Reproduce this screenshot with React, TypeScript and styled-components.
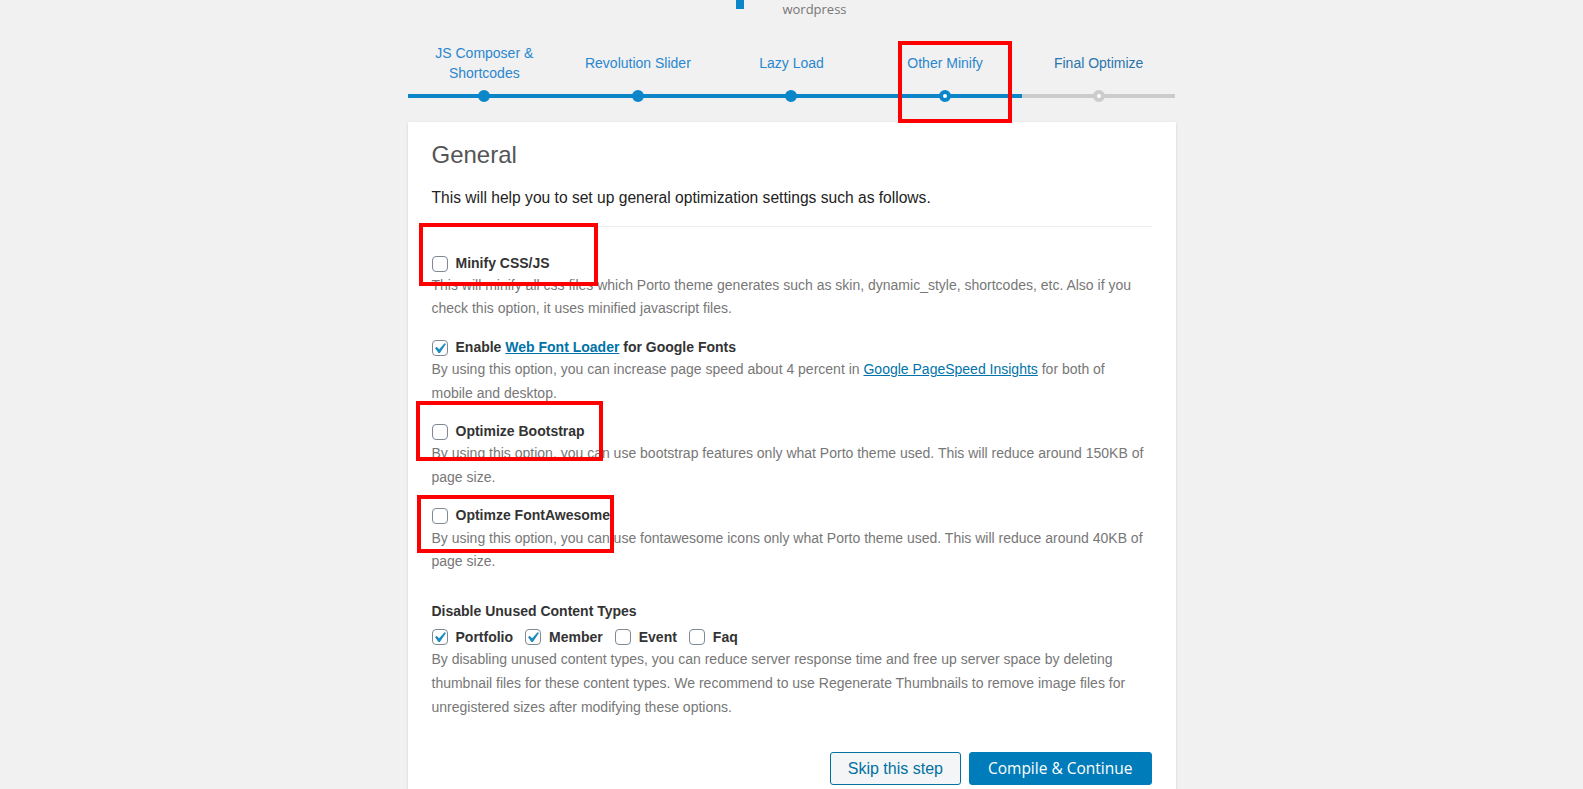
import React from "react";
import styled, { createGlobalStyle } from "styled-components";

const BLUE = "#0a86c9";

const GlobalStyle = createGlobalStyle`
  html, body { margin: 0; padding: 0; background: #f1f1f1; }
  body { font-family: "Liberation Sans", Arial, sans-serif; color: #444; }
  *, *::before, *::after { box-sizing: border-box; }
`;

const Page = styled.div`
  position: relative;
  height: 100vh;
  overflow: hidden;
`;

const Wrapper = styled.div`
  width: 768px;
  margin: 0 auto;
`;

const Header = styled.div`
  display: flex;
  justify-content: center;
  align-items: flex-start;
  gap: 38px;
  height: 18px;
`;

const LogoMark = styled.div`
  width: 8px;
  height: 9px;
  background: ${BLUE};
`;

const LogoText = styled.span`
  font-family: "Open Sans", sans-serif;
  font-size: 13px;
  line-height: 18px;
  color: #777;
`;

type StepState = "done" | "active" | "todo";

const Steps = styled.ol`
  display: flex;
  list-style: none;
  margin: 26px 0 0;
  padding: 0;
`;

const Step = styled.li<{ $state: StepState }>`
  position: relative;
  flex: 1 1 0;
  display: flex;
  align-items: center;
  justify-content: center;
  min-height: 54px;
  padding: 0 4px 11px;
  border-bottom: 4px solid ${(p) => (p.$state === "todo" ? "#ccc" : BLUE)};
  font-size: 14px;
  line-height: 19.5px;
  text-align: center;
  color: ${(p) => (p.$state === "todo" ? "#2b75ad" : "#2a87cf")};

  &::before {
    content: "";
    position: absolute;
    left: 50%;
    bottom: 0;
    width: 12px;
    height: 12px;
    margin: 0 0 -8px -6px;
    border: 4px solid ${(p) => (p.$state === "todo" ? "#ccc" : BLUE)};
    border-radius: 50%;
    background: ${(p) => (p.$state === "done" ? BLUE : "#fff")};
  }
`;

const Card = styled.div`
  margin-top: 24px;
  background: #fff;
  box-shadow: 0 1px 3px rgba(0, 0, 0, 0.13);
  padding: 18px 24px 24px;
`;

const Title = styled.h1`
  margin: 0;
  font-size: 24px;
  line-height: 30px;
  font-weight: 400;
  color: #555;
`;

const Intro = styled.p`
  margin: 16px 0 0;
  padding-bottom: 16px;
  border-bottom: 1px solid #eee;
  font-size: 15.6px;
  line-height: 24px;
  color: #222;
`;

const Options = styled.div`
  margin-top: 24px;
`;

const Option = styled.div`
  & + & {
    margin-top: 14.5px;
  }
`;

const OptionLabel = styled.label`
  display: flex;
  align-items: center;
  gap: 8px;
  padding-top: 1px;
  margin-bottom: -1px;
  font-size: 14px;
  font-weight: 700;
  line-height: 23.2px;
  color: #333;
`;

const Desc = styled.p<{ $lh?: number }>`
  margin: 0;
  max-width: 714px;
  font-size: 14px;
  line-height: ${(p) => p.$lh ?? 23.2}px;
  color: #777;
`;

const Link = styled.a`
  color: #0073aa;
  text-decoration: underline;
`;

const Box = styled.span`
  position: relative;
  flex: none;
  width: 16px;
  height: 16px;
  border: 1px solid #7e8993;
  border-radius: 4px;
  background: #fff;
`;

const Tick = styled.svg`
  position: absolute;
  top: -3px;
  left: -4px;
  width: 21px;
  height: 21px;
`;

const Section = styled.div`
  margin-top: 26px;
`;

const SectionTitle = styled.div`
  font-size: 14px;
  font-weight: 700;
  line-height: 24px;
  color: #333;
`;

const TypeRow = styled.div`
  display: flex;
  align-items: center;
  gap: 12px;
  margin: 3px 0 -2px;
  height: 23px;
`;

const TypeLabel = styled.label`
  display: flex;
  align-items: center;
  gap: 8px;
  font-size: 14px;
  font-weight: 700;
  line-height: 23px;
  color: #333;
`;

const Actions = styled.div`
  display: flex;
  justify-content: flex-end;
  gap: 8px;
  margin-top: 33px;
`;

const Button = styled.button<{ $primary?: boolean }>`
  height: 33px;
  padding: 0 ${(p) => (p.$primary ? 18 : 17)}px;
  border-radius: 3px;
  border: 1px solid ${(p) => (p.$primary ? "#007cba" : "#0071a1")};
  background: ${(p) => (p.$primary ? "#007cba" : "#f3f5f6")};
  color: ${(p) => (p.$primary ? "#fff" : "#0071a1")};
  font-family: ${(p) =>
    p.$primary ? '"Open Sans", sans-serif' : '"Liberation Sans", Arial, sans-serif'};
  font-size: ${(p) => (p.$primary ? 15.5 : 16)}px;
  line-height: 31px;
  cursor: pointer;
`;

const Annotation = styled.div<{ $x: number; $y: number; $w: number; $h: number }>`
  position: absolute;
  left: ${(p) => p.$x}px;
  top: ${(p) => p.$y}px;
  width: ${(p) => p.$w}px;
  height: ${(p) => p.$h}px;
  border: 4px solid #ff0000;
  pointer-events: none;
`;

function Checkbox({ checked }: { checked?: boolean }) {
  return (
    <Box>
      {checked && (
        <Tick viewBox="0 0 20 20">
          <path d="M14.83 4.89l1.34.94-5.81 8.38H9.02L5.78 9.67l1.34-1.25 2.57 2.4z" fill="#1e8cbe" />
        </Tick>
      )}
    </Box>
  );
}

const steps: { label: string; state: StepState }[] = [
  { label: "JS Composer & Shortcodes", state: "done" },
  { label: "Revolution Slider", state: "done" },
  { label: "Lazy Load", state: "done" },
  { label: "Other Minify", state: "active" },
  { label: "Final Optimize", state: "todo" },
];

const types = [
  { label: "Portfolio", checked: true },
  { label: "Member", checked: true },
  { label: "Event", checked: false },
  { label: "Faq", checked: false },
];

export default function App() {
  return (
    <Page>
      <GlobalStyle />
      <Wrapper>
        <Header>
          <LogoMark />
          <LogoText>wordpress</LogoText>
        </Header>
        <Steps>
          {steps.map((s) => (
            <Step key={s.label} $state={s.state}>
              {s.label}
            </Step>
          ))}
        </Steps>
        <Card>
          <Title>General</Title>
          <Intro>This will help you to set up general optimization settings such as follows.</Intro>
          <Options>
            <Option>
              <OptionLabel>
                <Checkbox />
                <span>Minify CSS/JS</span>
              </OptionLabel>
              <Desc>
                This will minify all css files which Porto theme generates such as skin, dynamic_style,
                shortcodes, etc. Also if you check this option, it uses minified javascript files.
              </Desc>
            </Option>
            <Option>
              <OptionLabel>
                <Checkbox checked />
                <span>
                  Enable <Link href="#">Web Font Loader</Link> for Google Fonts
                </span>
              </OptionLabel>
              <Desc>
                By using this option, you can increase page speed about 4 percent in{" "}
                <Link href="#">Google PageSpeed Insights</Link> for both of mobile and desktop.
              </Desc>
            </Option>
            <Option>
              <OptionLabel>
                <Checkbox />
                <span>Optimize Bootstrap</span>
              </OptionLabel>
              <Desc>
                By using this option, you can use bootstrap features only what Porto theme used. This will
                reduce around 150KB of page size.
              </Desc>
            </Option>
            <Option>
              <OptionLabel>
                <Checkbox />
                <span>Optimze FontAwesome</span>
              </OptionLabel>
              <Desc>
                By using this option, you can use fontawesome icons only what Porto theme used. This will
                reduce around 40KB of page size.
              </Desc>
            </Option>
          </Options>
          <Section>
            <SectionTitle>Disable Unused Content Types</SectionTitle>
            <TypeRow>
              {types.map((t) => (
                <TypeLabel key={t.label}>
                  <Checkbox checked={t.checked} />
                  <span>{t.label}</span>
                </TypeLabel>
              ))}
            </TypeRow>
            <Desc $lh={24}>
              By disabling unused content types, you can reduce server response time and free up server space
              by deleting thumbnail files for these content types. We recommend to use Regenerate Thumbnails to
              remove image files for unregistered sizes after modifying these options.
            </Desc>
          </Section>
          <Actions>
            <Button>Skip this step</Button>
            <Button $primary>Compile &amp; Continue</Button>
          </Actions>
        </Card>
      </Wrapper>
      <Annotation $x={898} $y={41} $w={114} $h={82} />
      <Annotation $x={419} $y={223} $w={179} $h={63} />
      <Annotation $x={416} $y={401} $w={187} $h={60} />
      <Annotation $x={417} $y={495} $w={197} $h={58} />
    </Page>
  );
}
